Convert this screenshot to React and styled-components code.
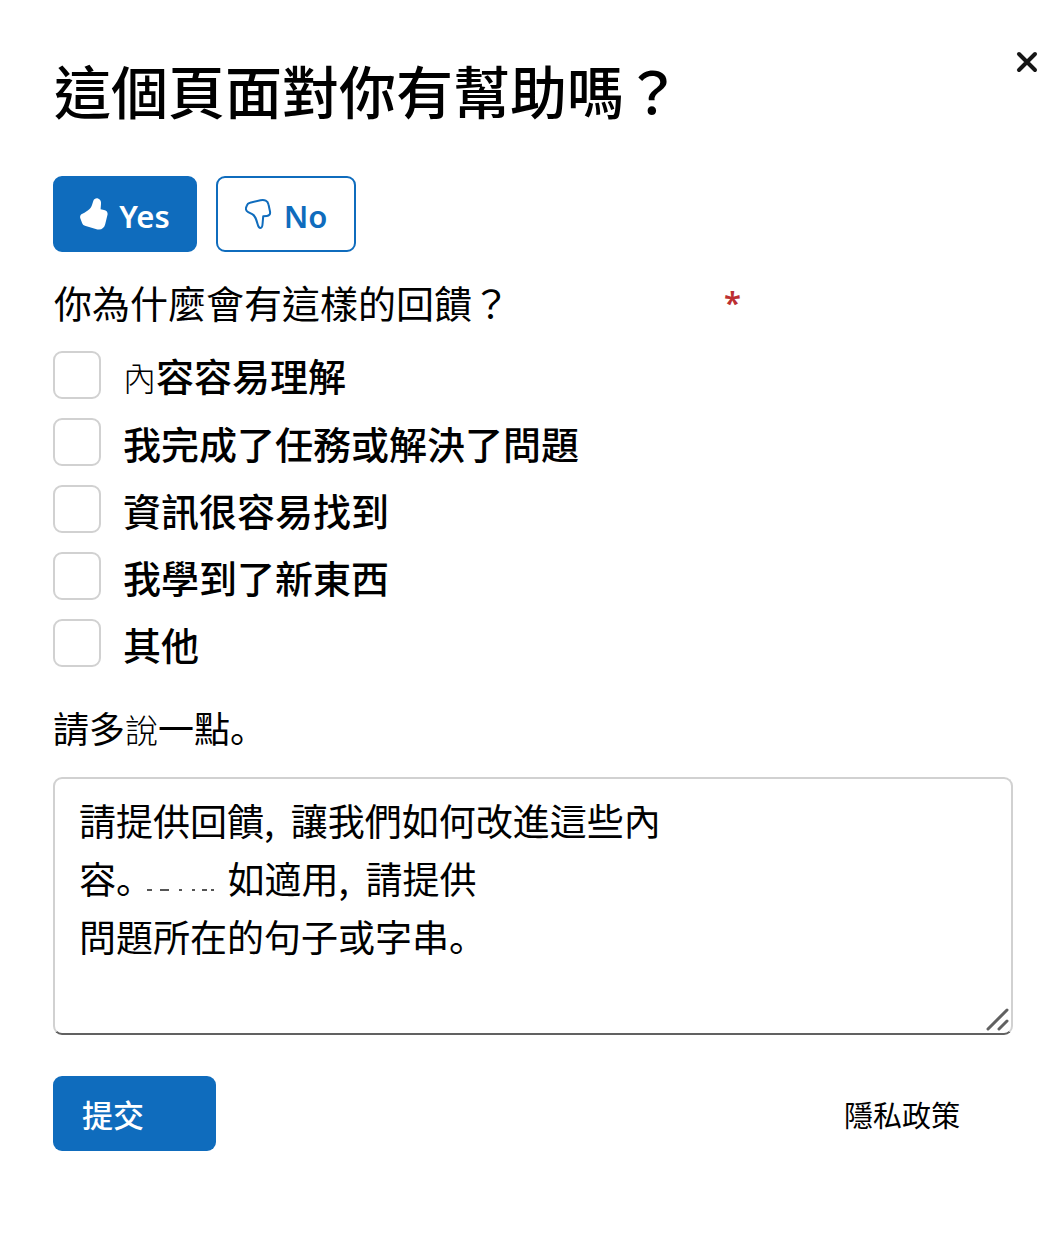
import React, { useState } from "react";
import styled, { createGlobalStyle } from "styled-components";

const GlobalStyle = createGlobalStyle`
  *, *::before, *::after { box-sizing: border-box; }
  body {
    margin: 0;
    background: #fff;
    color: #000;
    font-family: "Noto Sans", "Noto Sans CJK TC", sans-serif;
  }
  button, textarea { font-family: inherit; }
`;

const Panel = styled.form`
  display: flex;
  flex-direction: column;
  padding: 48px 49px 48px 53px;
`;

const Header = styled.header`
  display: flex;
  align-items: flex-start;
  justify-content: space-between;
  margin-right: -28px;
`;

const Title = styled.h1`
  margin: 0;
  padding: 5px 0 3px 1px;
  font-family: "Noto Sans CJK TC", sans-serif;
  font-size: 57px;
  font-weight: 500;
  line-height: 72px;
`;

const CloseButton = styled.button`
  display: flex;
  padding: 0;
  border: 0;
  background: none;
  color: #161616;
  cursor: pointer;
`;

const Votes = styled.div`
  display: flex;
  gap: 19px;
  margin-top: 48px;
`;

const VoteButton = styled.button`
  display: flex;
  align-items: center;
  justify-content: center;
  gap: 11px;
  width: ${(p) => (p.$wide ? 144 : 140)}px;
  height: 76px;
  padding: 4px 0 0;
  border: 2px solid #0f6cbd;
  border-radius: 9px;
  background: ${(p) => (p.$active ? "#0f6cbd" : "#fff")};
  color: ${(p) => (p.$active ? "#fff" : "#0f6cbd")};
  font-size: 31px;
  font-weight: 600;
  line-height: 40px;
  cursor: pointer;

  svg { margin-bottom: 5px; }
`;

const Reasons = styled.fieldset`
  margin: 22px 0 0;
  padding: 0;
  border: 0;
`;

const Question = styled.legend`
  display: flex;
  gap: 214px;
  padding: 0 0 0 1px;
  font-family: "Noto Sans CJK TC", sans-serif;
  font-size: 38px;
  line-height: 56px;
`;

const Required = styled.span`
  color: #bc2f32;
  font-family: "Noto Sans", sans-serif;
  font-size: 31px;
  font-weight: 600;
  line-height: 56px;
`;

const Options = styled.div`
  display: flex;
  flex-direction: column;
  gap: 19px;
  margin-top: 21px;
`;

const Option = styled.label`
  display: flex;
  align-items: center;
  gap: 22px;
  height: 48px;
  font-family: "Noto Sans CJK TC", sans-serif;
  font-size: 38px;
  font-weight: 500;
  line-height: 48px;
`;

const OptionText = styled.span`
  padding-top: 2px;
`;

const Small = styled.span`
  font-size: 33px;
  font-weight: 300;
`;

const LowStop = styled.span`
  font-family: "Noto Sans CJK JP", sans-serif;
  font-feature-settings: "locl" 0;
`;

const Checkbox = styled.input`
  appearance: none;
  flex: none;
  width: 48px;
  height: 48px;
  margin: 0;
  border: 2px solid #d1d1d1;
  border-radius: 9px;
  background: #fff;

  &:checked { background: #0f6cbd; border-color: #0f6cbd; }
`;

const MoreLabel = styled.label`
  margin-top: 32px;
  font-family: "Noto Sans CJK TC", sans-serif;
  font-size: 36px;
  line-height: 56px;
`;

const Field = styled.div`
  position: relative;
  display: flex;
  margin-top: 20px;
`;

const Comment = styled.textarea`
  width: 100%;
  height: 258px;
  padding: 12px 24px;
  border: 2px solid #d1d1d1;
  border-bottom-color: #616161;
  border-radius: 9px;
  background: #fff;
  color: #000;
  font-family: "Noto Sans CJK JP", sans-serif;
  font-feature-settings: "locl" 0;
  font-size: 37px;
  line-height: 58px;
  resize: none;
`;

const Grip = styled.svg`
  position: absolute;
  right: 2px;
  bottom: 2px;
  pointer-events: none;
`;

const Remnant = styled.svg`
  position: absolute;
  left: 28px;
  top: 111px;
  pointer-events: none;
`;

const Footer = styled.footer`
  display: flex;
  align-items: center;
  justify-content: space-between;
  margin-top: 41px;
  padding-right: 53px;
`;

const Submit = styled.button`
  width: 163px;
  height: 75px;
  padding: 0 29px;
  border: 0;
  border-radius: 9px;
  background: #0f6cbd;
  color: #fff;
  font-family: "Noto Sans CJK TC", sans-serif;
  font-size: 31px;
  font-weight: 500;
  text-align: left;
  cursor: pointer;
`;

const PrivacyLink = styled.a`
  color: #000;
  font-family: "Noto Sans CJK TC", sans-serif;
  font-size: 29px;
  text-decoration: none;
`;

const options = [
  { id: "easy", small: "內", text: "容容易理解" },
  { id: "solved", text: "我完成了任務或解決了問題" },
  { id: "found", text: "資訊很容易找到" },
  { id: "learned", text: "我學到了新東西" },
  { id: "other", text: "其他" },
];

const message =
  "請提供回饋, \u00a0讓我們如何改進這些內\n容。\u00a0\u00a0\u00a0\u00a0\u00a0\u00a0\u00a0\u00a0\u00a0如適用, \u00a0請提供\n問題所在的句子或字串。";

const ThumbUp = () => (
  <svg width="28" height="32" viewBox="0 0 28 32" aria-hidden="true">
    <path
      fill="currentColor"
      d="M13.2 3.200C14 .8 16 0 18 .5c2.400.7 3.300 2.900 3 5.500L20.600 11.300l3.400.6c2.700.5 4 2.400 3.500 4.900l-2.300 9.500c-.9 3.700-3.900 6-7.800 5.100L5.700 28.100C3.800 27.600 2.600 26.600 2 24.800L.4 20.600C-.4 18.300.4 16.800 2.400 15.800 8.500 12.700 10.800 10.500 12 7Z"
    />
  </svg>
);

const ThumbDown = () => (
  <svg width="28" height="32" viewBox="0 0 28 32" aria-hidden="true">
    <path
      fill="none"
      stroke="currentColor"
      strokeWidth="2"
      strokeLinejoin="round"
      d="M5 4.800 15.500 2.200C19.500 1.300 22.800 2.700 23.500 6.500L25 13.500C25.500 16.200 24.300 17.800 21.800 18L18.200 18.300 17.600 25.500C17.400 28.800 16.800 30 15.500 30 14 30 13.300 28.700 12.800 26.800 11.300 21.300 10.500 18 7.200 16.200L3.200 14.200C1.300 13.200.6 11.800 1 9.800L1.800 7.600C2.300 6 3.200 5.200 5 4.800Z"
    />
  </svg>
);

export default function App() {
  const [vote, setVote] = useState("yes");

  return (
    <>
      <GlobalStyle />
      <Panel lang="zh-Hant" onSubmit={(e) => e.preventDefault()}>
        <Header>
          <Title>這個頁面對你有幫助嗎？</Title>
          <CloseButton type="button" aria-label="關閉">
            <svg width="28" height="28" viewBox="0 0 28 28" aria-hidden="true">
              <path d="M6 6 22 22M22 6 6 22" stroke="currentColor" strokeWidth="4" strokeLinecap="round" />
            </svg>
          </CloseButton>
        </Header>

        <Votes>
          <VoteButton type="button" $wide $active={vote === "yes"} onClick={() => setVote("yes")}>
            <ThumbUp />
            Yes
          </VoteButton>
          <VoteButton type="button" $active={vote === "no"} onClick={() => setVote("no")}>
            <ThumbDown />
            No
          </VoteButton>
        </Votes>

        <Reasons>
          <Question>
            你為什麼會有這樣的回饋？<Required>*</Required>
          </Question>
          <Options>
            {options.map((o) => (
              <Option key={o.id} htmlFor={o.id}>
                <Checkbox type="checkbox" id={o.id} />
                <OptionText>
                  {o.small && <Small>{o.small}</Small>}
                  {o.text}
                </OptionText>
              </Option>
            ))}
          </Options>
        </Reasons>

        <MoreLabel htmlFor="comment">
          請多<Small>說</Small>一點<LowStop>。</LowStop>
        </MoreLabel>
        <Field>
          <Comment id="comment" defaultValue={message} />
          <Remnant width="134" height="4" viewBox="0 0 134 4" aria-hidden="true">
            <path
              d="M66 2h5M79 2h9M98 2h3M111 2h3M121 2h5M130 2h3"
              stroke="#555"
              strokeWidth="2"
            />
          </Remnant>
          <Grip width="26" height="26" viewBox="0 0 26 26" aria-hidden="true">
            <path d="M3 22 22 3M14 22l8-8" stroke="#616161" strokeWidth="3" strokeLinecap="round" />
          </Grip>
        </Field>

        <Footer>
          <Submit type="submit">提交</Submit>
          <PrivacyLink href="#privacy">隱私政策</PrivacyLink>
        </Footer>
      </Panel>
    </>
  );
}
